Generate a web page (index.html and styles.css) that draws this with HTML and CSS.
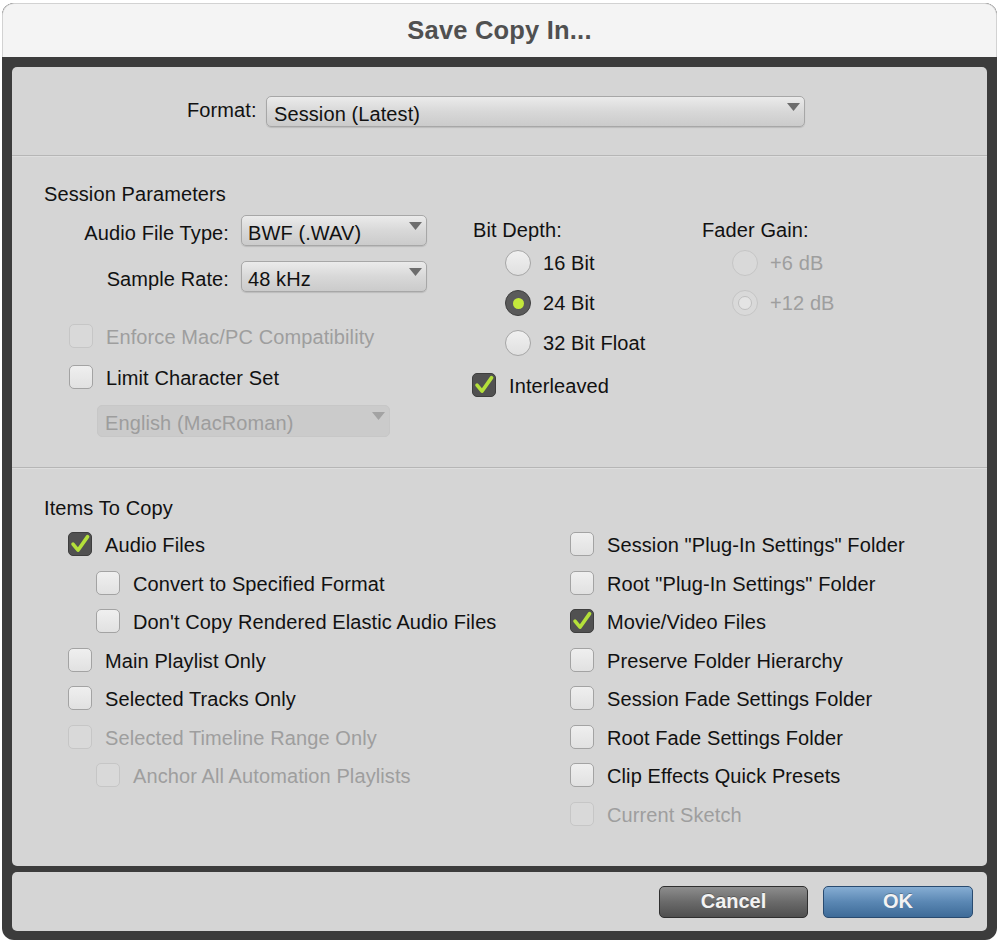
FILE: index.html
```html
<!DOCTYPE html>
<html lang="en">
<head>
<meta charset="utf-8">
<title>Save Copy In...</title>
<link rel="stylesheet" href="styles.css">
</head>
<body>
<div class="window">
  <div class="titlebar">Save Copy In...</div>
  <div class="frame">
    <div class="panel main">
      <section class="format-sec">
        <span class="format-label">Format:</span>
        <div class="select format-select">
          <span class="select-text">Session (Latest)</span>
          <svg class="arrow" viewBox="0 0 13 8"><path d="M0 0H13L6.5 8Z"/></svg>
        </div>
      </section>
      <div class="sep"></div>
      <section class="params">
        <div class="heading">Session Parameters</div>
        <div class="params-body">
          <div class="col-left">
            <div class="field-row">
              <span class="field-label">Audio File Type:</span>
              <div class="select small">
                <span class="select-text">BWF (.WAV)</span>
                <svg class="arrow" viewBox="0 0 13 8"><path d="M0 0H13L6.5 8Z"/></svg>
              </div>
            </div>
            <div class="field-row rate">
              <span class="field-label">Sample Rate:</span>
              <div class="select small">
                <span class="select-text">48 kHz</span>
                <svg class="arrow" viewBox="0 0 13 8"><path d="M0 0H13L6.5 8Z"/></svg>
              </div>
            </div>
            <div class="check-row enforce dis">
              <span class="cb"></span><span class="lbl">Enforce Mac/PC Compatibility</span>
            </div>
            <div class="check-row limit">
              <span class="cb"></span><span class="lbl">Limit Character Set</span>
            </div>
            <div class="select lang disabled">
              <span class="select-text">English (MacRoman)</span>
              <svg class="arrow" viewBox="0 0 13 8"><path d="M0 0H13L6.5 8Z"/></svg>
            </div>
          </div>
          <div class="col-mid">
            <div class="group-label">Bit Depth:</div>
            <div class="radio-list">
              <div class="radio-row"><span class="radio"></span><span class="rlbl">16 Bit</span></div>
              <div class="radio-row"><span class="radio on"><span class="dot"></span></span><span class="rlbl">24 Bit</span></div>
              <div class="radio-row"><span class="radio"></span><span class="rlbl">32 Bit Float</span></div>
            </div>
            <div class="check-row interleaved">
              <span class="cb checked"><svg viewBox="0 0 24 24"><path d="M5 12.2L10 18.2L19.6 4.6"/></svg></span><span class="lbl">Interleaved</span>
            </div>
          </div>
          <div class="col-right">
            <div class="group-label">Fader Gain:</div>
            <div class="radio-list fader dis">
              <div class="radio-row"><span class="radio"></span><span class="rlbl">+6 dB</span></div>
              <div class="radio-row"><span class="radio"><span class="ring"></span></span><span class="rlbl">+12 dB</span></div>
            </div>
          </div>
        </div>
      </section>
      <div class="sep"></div>
      <section class="items">
        <div class="heading">Items To Copy</div>
        <div class="items-body">
          <div class="items-col left">
            <div class="check-row"><span class="cb checked"><svg viewBox="0 0 24 24"><path d="M5 12.2L10 18.2L19.6 4.6"/></svg></span><span class="lbl">Audio Files</span></div>
            <div class="check-row sub"><span class="cb"></span><span class="lbl">Convert to Specified Format</span></div>
            <div class="check-row sub"><span class="cb"></span><span class="lbl">Don't Copy Rendered Elastic Audio Files</span></div>
            <div class="check-row"><span class="cb"></span><span class="lbl">Main Playlist Only</span></div>
            <div class="check-row"><span class="cb"></span><span class="lbl">Selected Tracks Only</span></div>
            <div class="check-row dis"><span class="cb"></span><span class="lbl">Selected Timeline Range Only</span></div>
            <div class="check-row sub dis"><span class="cb"></span><span class="lbl">Anchor All Automation Playlists</span></div>
          </div>
          <div class="items-col right">
            <div class="check-row"><span class="cb"></span><span class="lbl">Session "Plug-In Settings" Folder</span></div>
            <div class="check-row"><span class="cb"></span><span class="lbl">Root "Plug-In Settings" Folder</span></div>
            <div class="check-row"><span class="cb checked"><svg viewBox="0 0 24 24"><path d="M5 12.2L10 18.2L19.6 4.6"/></svg></span><span class="lbl">Movie/Video Files</span></div>
            <div class="check-row"><span class="cb"></span><span class="lbl">Preserve Folder Hierarchy</span></div>
            <div class="check-row"><span class="cb"></span><span class="lbl">Session Fade Settings Folder</span></div>
            <div class="check-row"><span class="cb"></span><span class="lbl">Root Fade Settings Folder</span></div>
            <div class="check-row"><span class="cb"></span><span class="lbl">Clip Effects Quick Presets</span></div>
            <div class="check-row dis"><span class="cb"></span><span class="lbl">Current Sketch</span></div>
          </div>
        </div>
      </section>
    </div>
    <div class="panel footer">
      <button class="btn cancel">Cancel</button>
      <button class="btn ok">OK</button>
    </div>
  </div>
</div>
</body>
</html>
```

FILE: styles.css
```css
html, body {
  margin: 0;
  padding: 0;
  background: #ffffff;
}

body {
  font-family: "Liberation Sans", Arial, Helvetica, sans-serif;
  font-size: 20px;
  letter-spacing: 0.1px;
  color: #111111;
}

.window {
  margin: 3px 0 0 2px;
  width: 995px;
  background: #3c3c3c;
  border-radius: 12px;
  overflow: hidden;
}

.titlebar {
  box-sizing: border-box;
  height: 54px;
  background: #f4f4f4;
  border: 1px solid #d2d2d2;
  border-bottom: none;
  border-radius: 12px 12px 0 0;
  display: flex;
  align-items: center;
  justify-content: center;
  font-weight: bold;
  font-size: 25.5px;
  letter-spacing: 0.2px;
  color: #505050;
  padding-top: 0;
}

.frame {
  padding: 10px 10px 9px 10px;
  display: flex;
  flex-direction: column;
  gap: 6px;
}

.panel {
  background: #d5d5d5;
  border-radius: 5px;
}

.panel.main {
  height: 799px;
  display: flex;
  flex-direction: column;
}

/* Format row */
.format-sec {
  box-sizing: border-box;
  height: 88px;
  padding: 29px 0 0 175px;
  display: flex;
  align-items: flex-start;
  gap: 10px;
}

.format-label {
  line-height: 24px;
  margin-top: 2px;
  width: 69px;
}

.select {
  box-sizing: border-box;
  display: flex;
  align-items: flex-start;
  height: 31px;
  border: 1px solid #a7a7a7;
  border-radius: 5px;
  background: linear-gradient(#ebebeb, #d8d8d8 50%, #cbcbcb);
  box-shadow: 0 1px 1px rgba(0, 0, 0, 0.12);
  padding: 5px 4px 0 7px;
}

.select-text {
  flex: 1;
  line-height: 24px;
  white-space: nowrap;
}

.arrow {
  width: 13px;
  height: 8px;
  margin-top: 1px;
  flex: none;
  fill: #6d6d6d;
}

.format-select {
  width: 539px;
}

.sep {
  height: 1px;
  background: #b6b6b6;
  border-bottom: 1px solid #dedede;
  flex: none;
}

/* Session parameters */
.params {
  box-sizing: border-box;
  height: 310px;
  padding: 25px 0 0 32px;
  flex: none;
}

.heading {
  line-height: 24px;
}

.params-body {
  margin-top: 9px;
  display: flex;
}

.col-left {
  width: 429px;
  display: flex;
  flex-direction: column;
}

.field-row {
  display: flex;
  align-items: flex-start;
  gap: 12px;
}

.field-row.rate {
  margin-top: 15px;
}

.field-label {
  width: 185px;
  text-align: right;
  line-height: 24px;
  padding-top: 6px;
}

.select.small {
  width: 186px;
  padding-left: 6px;
}

.check-row {
  display: flex;
  align-items: center;
  gap: 13px;
  height: 24px;
}

.check-row.enforce {
  margin: 32px 0 0 25px;
}

.check-row.limit {
  margin: 17px 0 0 25px;
}

.select.lang {
  margin: 16px 0 0 53px;
  width: 293px;
  height: 32px;
}

.select.disabled {
  background: #cbcbcb;
  border-color: #c7c7c7;
  box-shadow: none;
  color: #9d9d9d;
}

.select.disabled .arrow {
  fill: #a3a3a3;
}

.cb {
  box-sizing: border-box;
  flex: none;
  width: 24px;
  height: 24px;
  border: 1px solid #a3a3a3;
  border-radius: 5px;
  background: linear-gradient(#efefef, #e1e1e1);
  display: flex;
}

.cb svg {
  width: 24px;
  height: 24px;
  margin: -1px;
}

.cb svg path {
  fill: none;
  stroke: #b4e03a;
  stroke-width: 3.6;
  stroke-linecap: round;
  stroke-linejoin: round;
}

.cb.checked {
  background: #515151;
  border-color: #3e3e3e;
}

.lbl {
  line-height: 24px;
  padding-top: 1px;
  margin-bottom: -1px;
  white-space: nowrap;
}

.dis .lbl,
.dis .rlbl {
  color: #9e9e9e;
}

.dis .cb {
  background: #d9d9d9;
  border-color: #c6c6c6;
}

.col-mid {
  width: 229px;
  padding-top: 3px;
  display: flex;
  flex-direction: column;
}

.col-right {
  padding-top: 3px;
  display: flex;
  flex-direction: column;
}

.group-label {
  line-height: 24px;
}

.radio-list {
  margin: 8px 0 0 32px;
  display: flex;
  flex-direction: column;
  gap: 14px;
}

.radio-list.fader {
  margin-left: 30px;
}

.radio-row {
  display: flex;
  align-items: center;
  gap: 12px;
  height: 26px;
}

.rlbl {
  line-height: 24px;
  padding-top: 0;
  white-space: nowrap;
}

.radio {
  box-sizing: border-box;
  flex: none;
  width: 26px;
  height: 26px;
  border-radius: 50%;
  border: 1px solid #a6a6a6;
  background: linear-gradient(#f0f0f0, #e0e0e0);
  display: flex;
  align-items: center;
  justify-content: center;
}

.radio.on {
  background: #5a5a5a;
  border: 1.5px solid #3f3f3f;
}

.dot {
  width: 11px;
  height: 11px;
  border-radius: 50%;
  background: #c4e83c;
}

.dis .radio {
  background: #d9d9d9;
  border-color: #c5c5c5;
}

.ring {
  box-sizing: border-box;
  width: 14px;
  height: 14px;
  border-radius: 50%;
  border: 1px solid #bfbfbf;
  background: #e4e4e4;
}

.check-row.interleaved {
  margin: 17px 0 0 -1px;
}

/* Items to copy */
.items {
  padding: 27px 0 0 32px;
}

.items-body {
  margin-top: 12px;
  display: flex;
}

.items-col {
  display: flex;
  flex-direction: column;
  gap: 14.5px;
}

.items-col.left {
  width: 502px;
  padding-left: 24px;
}

.check-row.sub {
  margin-left: 28px;
}

/* Footer */
.panel.footer {
  height: 59px;
  display: flex;
  justify-content: flex-end;
  align-items: center;
  gap: 15px;
  padding-right: 14px;
}

.btn {
  box-sizing: border-box;
  height: 32px;
  border-radius: 5px;
  font-family: "Liberation Sans", Arial, Helvetica, sans-serif;
  font-weight: bold;
  font-size: 20px;
  color: #f3f3f3;
  padding: 0;
  margin: 0;
  text-shadow: 0 -1px 0 rgba(0, 0, 0, 0.25);
}

.btn.cancel {
  width: 149px;
  border: 1px solid #2f2f2f;
  background: linear-gradient(#8d8d8d, #6a6a6a 50%, #4f4f4f);
}

.btn.ok {
  width: 150px;
  border: 1px solid #294b70;
  background: linear-gradient(#86add3, #5a87b3 50%, #3e6b98);
}
```
